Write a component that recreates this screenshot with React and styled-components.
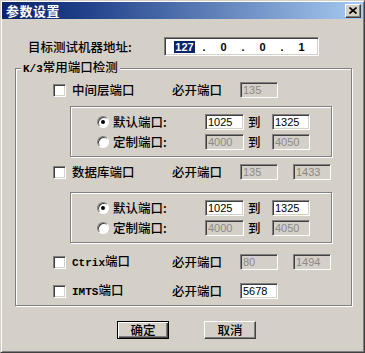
import styled, { createGlobalStyle } from 'styled-components';

const GlobalStyle = createGlobalStyle`
  html, body {
    margin: 0;
    padding: 0;
    background: #d4d0c8;
  }
  body {
    font-family: "Noto Sans CJK SC", "Liberation Sans", sans-serif;
    font-size: 12.5px;
    font-weight: 500;
    color: #000;
  }
`;

const Window = styled.div`
  width: 365px;
  height: 353px;
  box-sizing: border-box;
  padding: 1px;
  background: #d4d0c8;
  border: 1px solid;
  border-color: #d4d0c8 #404040 #404040 #d4d0c8;
  box-shadow: inset 1px 1px 0 #fff, inset -1px -1px 0 #808080;
  display: flex;
  flex-direction: column;
`;

const TitleBar = styled.div`
  height: 17px;
  display: flex;
  align-items: center;
  justify-content: space-between;
  padding: 0 2px 0 4px;
  background: linear-gradient(to right, #0a246a 0%, #1c3c86 20%, #a6caf0 100%);
`;

const Title = styled.span`
  color: #fff;
  font-weight: bold;
  font-size: 13px;
  line-height: 17px;
  letter-spacing: 0.5px;
`;

const CloseButton = styled.div`
  width: 14px;
  height: 12px;
  background: #d4d0c8;
  border: 1px solid;
  border-color: #fff #404040 #404040 #fff;
  box-shadow: inset -1px -1px 0 #808080;
  display: flex;
  align-items: center;
  justify-content: center;
`;

const IpRow = styled.div`
  display: flex;
  align-items: center;
  margin-top: 18px;
  padding-left: 26px;
`;

const Label = styled.span`
  width: ${(p) => p.$w}px;
  flex: none;
  line-height: 16px;
  white-space: nowrap;
`;

const Sunken = styled.div`
  box-sizing: border-box;
  border: 1px solid;
  border-color: #808080 #fff #fff #808080;
  box-shadow: inset 1px 1px 0 #404040, inset -1px -1px 0 #d4d0c8;
`;

const IpField = styled(Sunken)`
  width: 155px;
  height: 19px;
  background: #fff;
  display: flex;
  align-items: center;
  padding-left: 3px;
  font-family: "Liberation Sans", sans-serif;
  font-size: 11px;
  font-weight: bold;
`;

const IpPart = styled.span`
  width: ${(p) => (p.$dot ? 6 : 33)}px;
  text-align: center;
`;

const Selected = styled.span`
  background: #0a246a;
  color: #fff;
  padding: 0 1px;
`;

const Group = styled.fieldset`
  margin: 4px 11px 0 13px;
  padding: 0 0 6px 0;
  border: 1px solid #808080;
  box-shadow: inset 1px 1px 0 #fff, 1px 1px 0 #fff;
  min-width: 0;
`;

const Legend = styled.legend`
  margin-left: 5px;
  padding: 0 2px;
  line-height: 14px;
  background: #d4d0c8;
`;

const Mono = styled.span`
  font-family: "Liberation Mono", monospace;
  font-size: 11px;
  font-weight: bold;
`;

const PortRow = styled.div`
  display: flex;
  align-items: center;
  height: 16px;
  margin-top: ${(p) => p.$top}px;
  padding-left: 37px;
`;

const CheckBox = styled(Sunken)`
  width: 13px;
  height: 13px;
  background: #fff;
  flex: none;
  margin-right: 6px;
`;

const Field = styled(Sunken)`
  width: ${(p) => p.$w || 38}px;
  height: 16px;
  flex: none;
  background: ${(p) => (p.$off ? '#d4d0c8' : '#fff')};
  color: ${(p) => (p.$off ? '#8a8a8a' : '#000')};
  font-family: "Liberation Sans", sans-serif;
  font-size: 11px;
  font-weight: normal;
  line-height: 14px;
  padding-left: 2px;
  margin-left: ${(p) => p.$ml || 0}px;
`;

const Inner = styled.div`
  margin: ${(p) => p.$top}px 0 0 54px;
  width: 262px;
  box-sizing: border-box;
  padding: 7px 0 6px 26px;
  border: 1px solid #808080;
  box-shadow: inset 1px 1px 0 #fff, 1px 1px 0 #fff;
  display: flex;
  flex-direction: column;
  gap: 4px;
`;

const RadioRow = styled.div`
  display: flex;
  align-items: center;
  height: 16px;
`;

const Radio = styled.div`
  width: 12px;
  height: 12px;
  box-sizing: border-box;
  flex: none;
  border-radius: 50%;
  background: #fff;
  border: 1px solid;
  border-color: #808080 #fff #fff #808080;
  box-shadow: inset 1px 1px 0 #404040;
  display: flex;
  align-items: center;
  justify-content: center;
  margin-right: 4px;
`;

const Dot = styled.div`
  width: 4px;
  height: 4px;
  border-radius: 50%;
  background: #000;
`;

const To = styled.span`
  width: 24px;
  margin-left: 4px;
  flex: none;
  line-height: 16px;
`;

const ButtonRow = styled.div`
  display: flex;
  gap: 35px;
  margin-top: 15px;
  padding-left: 115px;
`;

const Button = styled.div`
  width: 52px;
  height: 18px;
  box-sizing: border-box;
  display: flex;
  align-items: center;
  justify-content: center;
  background: #d4d0c8;
  border: 1px solid;
  border-color: ${(p) => (p.$default ? '#000' : '#fff #404040 #404040 #fff')};
  box-shadow: ${(p) =>
    p.$default
      ? 'inset 1px 1px 0 #fff, inset -1px -1px 0 #404040, inset -2px -2px 0 #808080'
      : 'inset -1px -1px 0 #808080'};
  font-size: 12.5px;
  line-height: 16px;
`;

const PortLine = ({ top, name, a, b, bOff, aOff = true }) => (
  <PortRow $top={top}>
    <CheckBox />
    <Label $w={100}>{name}</Label>
    <Label $w={68}>必开端口</Label>
    <Field $off={aOff}>{a}</Field>
    {b && (
      <Field $off={bOff} $ml={15}>
        {b}
      </Field>
    )}
  </PortRow>
);

const RangeBox = ({ top }) => (
  <Inner $top={top}>
    <RadioRow>
      <Radio>
        <Dot />
      </Radio>
      <Label $w={92}>默认端口:</Label>
      <Field $w={39}>1025</Field>
      <To>到</To>
      <Field>1325</Field>
    </RadioRow>
    <RadioRow>
      <Radio />
      <Label $w={92}>定制端口:</Label>
      <Field $w={39} $off>
        4000
      </Field>
      <To>到</To>
      <Field $off>4050</Field>
    </RadioRow>
  </Inner>
);

export default function App() {
  return (
    <>
      <GlobalStyle />
      <Window>
        <TitleBar>
          <Title>参数设置</Title>
          <CloseButton>
            <svg width="8" height="7" viewBox="0 0 8 7">
              <path d="M0.5 0.5 L7.5 6.5 M7.5 0.5 L0.5 6.5" stroke="#000" strokeWidth="1.6" />
            </svg>
          </CloseButton>
        </TitleBar>

        <IpRow>
          <Label $w={136}>目标测试机器地址:</Label>
          <IpField>
            <IpPart>
              <Selected>127</Selected>
            </IpPart>
            <IpPart $dot>.</IpPart>
            <IpPart>0</IpPart>
            <IpPart $dot>.</IpPart>
            <IpPart>0</IpPart>
            <IpPart $dot>.</IpPart>
            <IpPart>1</IpPart>
          </IpField>
        </IpRow>

        <Group>
          <Legend>
            <Mono>K/3</Mono>常用端口检测
          </Legend>
          <PortLine top={6} name="中间层端口" a="135" />
          <RangeBox top={8} />
          <PortLine top={7} name="数据库端口" a="135" b="1433" bOff />
          <RangeBox top={12} />
          <PortLine
            top={11}
            name={
              <>
                <Mono>Ctrix</Mono>端口
              </>
            }
            a="80"
            b="1494"
            bOff
          />
          <PortLine
            top={13}
            name={
              <>
                <Mono>IMTS</Mono>端口
              </>
            }
            a="5678"
            aOff={false}
          />
        </Group>

        <ButtonRow>
          <Button $default>确定</Button>
          <Button>取消</Button>
        </ButtonRow>
      </Window>
    </>
  );
}
